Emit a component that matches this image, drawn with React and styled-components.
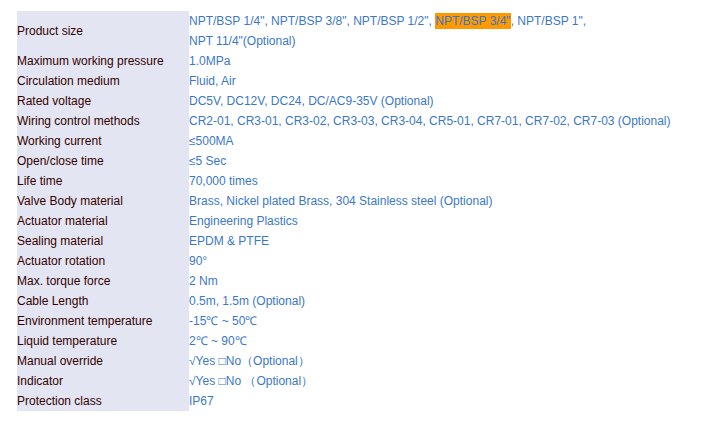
import React from "react";
import styled, { createGlobalStyle } from "styled-components";

const Global = createGlobalStyle`
  html, body { margin: 0; padding: 0; background: #fff; }
  body { font-family: "Liberation Sans", Arial, sans-serif; font-size: 12px; }
`;

const Page = styled.div`
  padding: 11px 0 0 17px;
`;

const Table = styled.div`
  display: grid;
  grid-template-columns: 172px auto;
  width: max-content;
`;

const Label = styled.div`
  background: #e3e6f2;
  color: #300;
  display: flex;
  align-items: center;
  min-height: 20px;
  line-height: 20px;
`;

const Value = styled.div`
  color: #3a78c8;
  line-height: 20px;
  white-space: ${(p) => (p.$multi ? "normal" : "nowrap")};
`;

const Mark = styled.span`
  background: #ff9900;
  padding: 1px 0;
`;

const rows = [
  ["Maximum working pressure", "1.0MPa"],
  ["Circulation medium", "Fluid, Air"],
  ["Rated voltage", "DC5V, DC12V, DC24, DC/AC9-35V (Optional)"],
  ["Wiring control methods", "CR2-01, CR3-01, CR3-02, CR3-03, CR3-04, CR5-01, CR7-01, CR7-02, CR7-03 (Optional)"],
  ["Working current", "≤500MA"],
  ["Open/close time", "≤5 Sec"],
  ["Life time", "70,000 times"],
  ["Valve Body material", "Brass, Nickel plated Brass, 304 Stainless steel (Optional)"],
  ["Actuator material", "Engineering Plastics"],
  ["Sealing material", "EPDM & PTFE"],
  ["Actuator rotation", "90°"],
  ["Max. torque force", "2 Nm"],
  ["Cable Length", "0.5m, 1.5m (Optional)"],
  ["Environment temperature", "-15℃ ~ 50℃"],
  ["Liquid temperature", "2℃ ~ 90℃"],
  ["Manual override", "√Yes □No（Optional）"],
  ["Indicator", "√Yes □No （Optional）"],
  ["Protection class", "IP67"],
];

export default function App() {
  return (
    <Page>
      <Global />
      <Table>
        <Label>Product size</Label>
        <Value $multi>
          NPT/BSP 1/4", NPT/BSP 3/8", NPT/BSP 1/2", <Mark>NPT/BSP 3/4"</Mark>, NPT/BSP 1",
          <br />
          NPT 11/4"(Optional)
        </Value>
        {rows.map(([label, value]) => (
          <React.Fragment key={label}>
            <Label>{label}</Label>
            <Value>{value}</Value>
          </React.Fragment>
        ))}
      </Table>
    </Page>
  );
}
